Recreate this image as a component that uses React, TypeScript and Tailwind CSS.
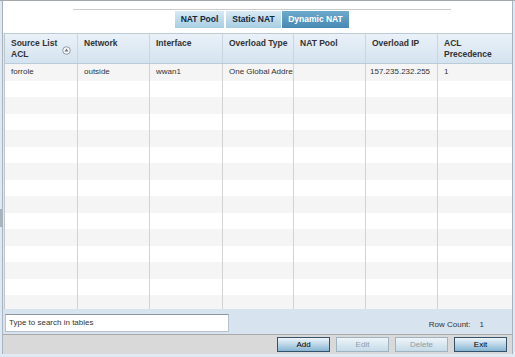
import React from "react";

const widths = ["w-[73px]", "w-[72px]", "w-[73px]", "w-[71px]", "w-[72px]", "w-[72px]", "flex-1"];

function SortIcon() {
  return (
    <svg width="9" height="9" viewBox="0 0 9 9" className="shrink-0">
      <circle cx="4.5" cy="4.5" r="3.8" fill="#f4f7fa" stroke="#8a8f94" strokeWidth="0.9" />
      <path d="M4.5 2.6 L6.4 5.4 L2.6 5.4 Z" fill="#6d7378" />
    </svg>
  );
}

export default function App() {
  const data = ["forrole", "outside", "wwan1", "One Global Address", "", "157.235.232.255", "1"];
  const rows = Array.from({ length: 15 });
  return (
    <div className="w-[515px] h-[357px] bg-[#dfe9f3] border-t border-[#a3a8ad] flex items-start overflow-hidden font-['Liberation_Sans',Arial,sans-serif] text-[#222]">
      <div className="w-[2px] flex flex-col">
        <div className="h-[208px]" />
        <div className="h-[18px] bg-[#aab3bb]" />
      </div>
      <div className="w-[511px] h-[353px] border-l border-r border-[#a7b4c0] flex flex-col">
        {/* Tabs */}
        <div className="h-[32px] bg-white pt-[8px]">
          <div className="ml-[70px] w-[378px] border-t border-[#cccccc] pt-[1px] flex justify-center">
            <div className="w-[49px] h-[17px] bg-gradient-to-b from-[#d9eaf4] to-[#a6cde2] text-[#13293a] text-[8.5px] font-bold flex items-center justify-center">
              NAT Pool
            </div>
            <div className="ml-[2px] w-[55px] h-[17px] bg-gradient-to-b from-[#d9eaf4] to-[#a6cde2] text-[#13293a] text-[8.5px] font-bold flex items-center justify-center">
              Static NAT
            </div>
            <div className="ml-[1px] w-[67px] h-[17px] bg-gradient-to-b from-[#6eaacd] to-[#4689b3] text-white text-[8.5px] font-bold flex items-center justify-center">
              Dynamic NAT
            </div>
          </div>
        </div>
        {/* Table */}
        <div className="ml-[1px] border-l border-[#bfc6cc] bg-white flex flex-col">
          <div className="h-[31px] border-t border-b border-[#bccbd8] bg-gradient-to-b from-[#eaf1f8] to-[#d4e3f0] flex text-[8.5px] font-bold text-[#333] leading-[10.5px]">
            <div className={`${widths[0]} border-r border-[#c9d6e2] pl-[6px] pt-[4px] flex`}>
              <div>Source List<br />ACL</div>
              <div className="ml-auto mr-[6px] mt-[8px]"><SortIcon /></div>
            </div>
            <div className={`${widths[1]} border-r border-[#c9d6e2] pl-[6px] pt-[4px]`}>Network</div>
            <div className={`${widths[2]} border-r border-[#c9d6e2] pl-[6px] pt-[4px]`}>Interface</div>
            <div className={`${widths[3]} border-r border-[#c9d6e2] pl-[6px] pt-[4px]`}>Overload Type</div>
            <div className={`${widths[4]} border-r border-[#c9d6e2] pl-[6px] pt-[4px]`}>NAT Pool</div>
            <div className={`${widths[5]} border-r border-[#c9d6e2] pl-[6px] pt-[4px]`}>Overload IP</div>
            <div className={`${widths[6]} pl-[6px] pt-[4px]`}>ACL<br />Precedence</div>
          </div>
          <div className="h-[245px] overflow-hidden">
            {rows.map((_, i) => (
              <div key={i} className={`h-[16.5px] flex text-[8px] ${i % 2 === 0 ? "bg-[#f5f5f5]" : "bg-white"}`}>
                {widths.map((w, j) => (
                  <div
                    key={j}
                    className={`${w} ${j < 6 ? "border-r border-[#d3d3d3]" : ""} ${j === 5 ? "pl-[4px]" : "pl-[6px]"} flex items-center overflow-hidden whitespace-nowrap text-[#333]`}
                  >
                    {i === 0 ? data[j] : ""}
                  </div>
                ))}
              </div>
            ))}
          </div>
        </div>
        {/* Search bar */}
        <div className="h-[25px] bg-[#d7e4f0] flex items-start">
          <div className="ml-[2px] mt-[5px] w-[224px] h-[18px] bg-white border border-[#b9c2ca] border-t-[#8d969e] flex items-center pl-[3px] text-[8px] text-[#333]">
            Type to search in tables
          </div>
          <div className="ml-auto mr-[28px] mt-[10px] text-[8px] text-[#333] flex">
            <span>Row Count:</span>
            <span className="ml-[9px]">1</span>
          </div>
        </div>
        {/* Footer */}
        <div className="h-[20px] bg-[#d9d9d9] border-t border-[#a9a9a9] flex justify-end items-start pr-[5px] pt-[2px] gap-[6px]">
          <div className="w-[53px] h-[15px] border border-[#34536a] bg-gradient-to-b from-[#eef5fa] to-[#86b6d3] text-[8px] text-black flex items-center justify-center">Add</div>
          <div className="w-[53px] h-[15px] border border-[#9fb3c1] bg-gradient-to-b from-[#eef4f8] to-[#c5dbe8] text-[8px] text-[#8e9ca6] flex items-center justify-center">Edit</div>
          <div className="w-[53px] h-[15px] border border-[#9fb3c1] bg-gradient-to-b from-[#eef4f8] to-[#c5dbe8] text-[8px] text-[#8e9ca6] flex items-center justify-center">Delete</div>
          <div className="w-[53px] h-[15px] border border-[#34536a] bg-gradient-to-b from-[#eef5fa] to-[#86b6d3] text-[8px] text-black flex items-center justify-center">Exit</div>
        </div>
      </div>
    </div>
  );
}
